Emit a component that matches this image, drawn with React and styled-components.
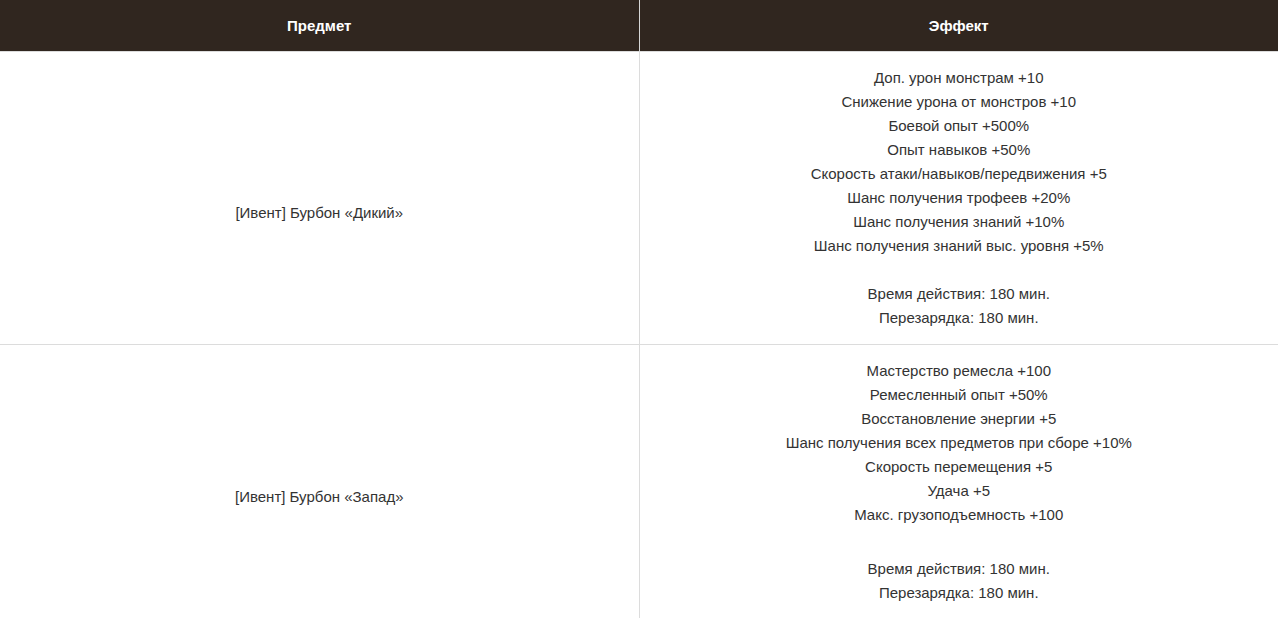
import React from "react";
import styled, { createGlobalStyle } from "styled-components";

const GlobalStyle = createGlobalStyle`
  body {
    margin: 0;
    background: #fff;
    font-family: "Liberation Sans", Arial, sans-serif;
  }
`;

const items = [
  {
    name: "[Ивент] Бурбон «Дикий»",
    effects: [
      "Доп. урон монстрам +10",
      "Снижение урона от монстров +10",
      "Боевой опыт +500%",
      "Опыт навыков +50%",
      "Скорость атаки/навыков/передвижения +5",
      "Шанс получения трофеев +20%",
      "Шанс получения знаний +10%",
      "Шанс получения знаний выс. уровня +5%",
    ],
    gap: 24,
  },
  {
    name: "[Ивент] Бурбон «Запад»",
    effects: [
      "Мастерство ремесла +100",
      "Ремесленный опыт +50%",
      "Восстановление энергии +5",
      "Шанс получения всех предметов при сборе +10%",
      "Скорость перемещения +5",
      "Удача +5",
      "Макс. грузоподъемность +100",
    ],
    gap: 30,
  },
];

function App() {
  return (
    <>
      <GlobalStyle />
      <Table>
        <colgroup>
          <col style={{ width: "639px" }} />
          <col />
        </colgroup>
        <thead>
          <tr>
            <HeadCell>Предмет</HeadCell>
            <HeadCell>Эффект</HeadCell>
          </tr>
        </thead>
        <tbody>
          {items.map((item) => (
            <tr key={item.name}>
              <NameCell>{item.name}</NameCell>
              <EffectCell>
                {item.effects.map((line) => (
                  <Line key={line}>{line}</Line>
                ))}
                <Spacer $h={item.gap} />
                <Line>Время действия: 180 мин.</Line>
                <Line>Перезарядка: 180 мин.</Line>
              </EffectCell>
            </tr>
          ))}
        </tbody>
      </Table>
    </>
  );
}

export default App;

const Table = styled.table`
  width: 100%;
  border-collapse: collapse;
  table-layout: fixed;
  font-size: 15px;
  color: #333;
`;

const HeadCell = styled.th`
  background: #30261f;
  color: #fff;
  font-weight: bold;
  font-size: 15px;
  height: 51px;
  padding: 0 10px;
  text-align: center;
  border-right: 1px solid #d6d6d6;
  border-bottom: 1px solid #dcdcdc;

  &:last-child {
    border-right: none;
  }
`;

const NameCell = styled.td`
  text-align: center;
  vertical-align: middle;
  line-height: 24px;
  padding: 44px 10px 14px;
  border-right: 1px solid #dcdcdc;
  border-bottom: 1px solid #dcdcdc;
`;

const EffectCell = styled.td`
  text-align: center;
  vertical-align: top;
  line-height: 24px;
  padding: 14px 10px 14px;
  border-bottom: 1px solid #dcdcdc;
`;

const Line = styled.div`
  height: 24px;
`;

const Spacer = styled.div`
  height: ${(p) => p.$h}px;
`;
